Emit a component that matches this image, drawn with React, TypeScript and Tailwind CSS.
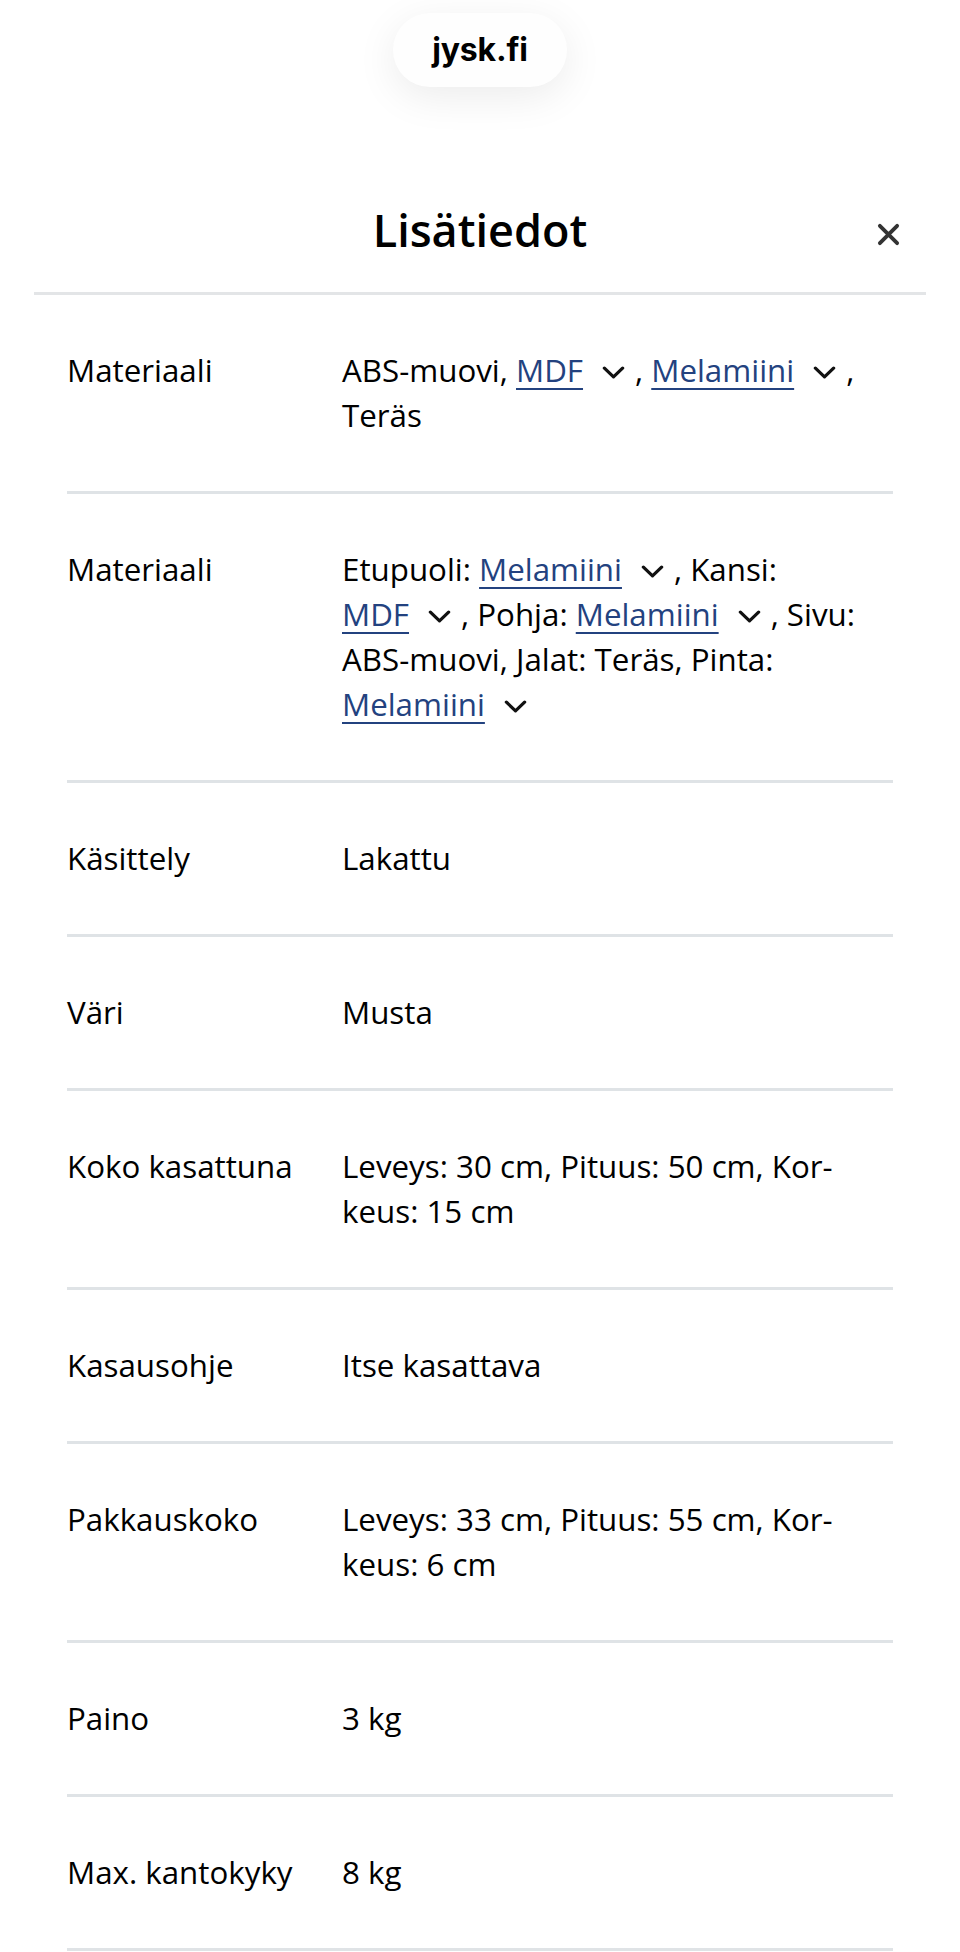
import React from "react";

type Part = string | { link: string };

type Row = {
  label: string;
  value: Part[];
};

const rows: Row[] = [
  {
    label: "Materiaali",
    value: ["ABS-muovi, ", { link: "MDF" }, ", ", { link: "Melamiini" }, ", Teräs"],
  },
  {
    label: "Materiaali",
    value: [
      "Etupuoli: ",
      { link: "Melamiini" },
      ", Kansi: ",
      { link: "MDF" },
      ", Pohja: ",
      { link: "Melamiini" },
      ", Sivu: ABS-muovi, Jalat: Teräs, Pinta: ",
      { link: "Melamiini" },
    ],
  },
  { label: "Käsittely", value: ["Lakattu"] },
  { label: "Väri", value: ["Musta"] },
  { label: "Koko kasattuna", value: ["Leveys: 30 cm, Pituus: 50 cm, Kor\u00ADkeus: 15 cm"] },
  { label: "Kasausohje", value: ["Itse kasattava"] },
  { label: "Pakkauskoko", value: ["Leveys: 33 cm, Pituus: 55 cm, Kor\u00ADkeus: 6 cm"] },
  { label: "Paino", value: ["3 kg"] },
  { label: "Max. kantokyky", value: ["8 kg"] },
];

const Chevron = () => (
  <svg
    viewBox="0 0 24 13"
    className="inline-block w-[23px] h-[13px] ml-[19px] mr-[10px] align-[3px]"
    fill="none"
    stroke="#111"
    strokeWidth={3.4}
    strokeLinecap="round"
    strokeLinejoin="round"
  >
    <path d="M2.5 2 L12 11 L21.5 2" />
  </svg>
);

const App = () => {
  return (
    <div className="min-h-screen bg-white text-black font-['Open_Sans',sans-serif]">
      {/* url pill */}
      <div className="flex justify-center pt-[13px]">
        <div className="flex h-[74px] w-[174px] items-center justify-center rounded-full bg-[#fefefe] shadow-[0_10px_40px_rgba(0,0,0,0.08)]">
          <span className="font-['Inter',sans-serif] text-[32px] font-bold leading-none tracking-[-0.2px]">
            jysk.fi
          </span>
        </div>
      </div>

      {/* header */}
      <div className="mx-[34px] mt-[113px] border-b-[3px] border-[#e3e5e7] pb-[32px]">
        <div className="grid grid-cols-[1fr_auto_1fr] items-center">
          <div />
          <h1 className="text-[45px] font-semibold leading-[60px]">Lisätiedot</h1>
          <div className="flex justify-end pr-[26px] pt-[8px]">
            <svg viewBox="0 0 24 24" className="h-[23px] w-[23px]" stroke="#333" strokeWidth={4} strokeLinecap="round">
              <path d="M3 3 L21 21 M21 3 L3 21" />
            </svg>
          </div>
        </div>
      </div>

      {/* rows */}
      <div className="mx-[67px]">
        {rows.map((row, i) => (
          <div
            key={i}
            className="flex border-b-[3px] border-[#dfe3e6] py-[53px] text-[31.3px] leading-[45px]"
          >
            <div className="w-[275px] shrink-0">{row.label}</div>
            <div className="flex-1 min-w-0">
              {row.value.map((part, j) =>
                typeof part === "string" ? (
                  <React.Fragment key={j}>{part}</React.Fragment>
                ) : (
                  <span key={j} className="whitespace-nowrap">
                    <a className="text-[#23427f] underline decoration-[2px] underline-offset-[6px]">
                      {part.link}
                    </a>
                    <Chevron />
                  </span>
                )
              )}
            </div>
          </div>
        ))}
      </div>
    </div>
  );
};

export default App;
